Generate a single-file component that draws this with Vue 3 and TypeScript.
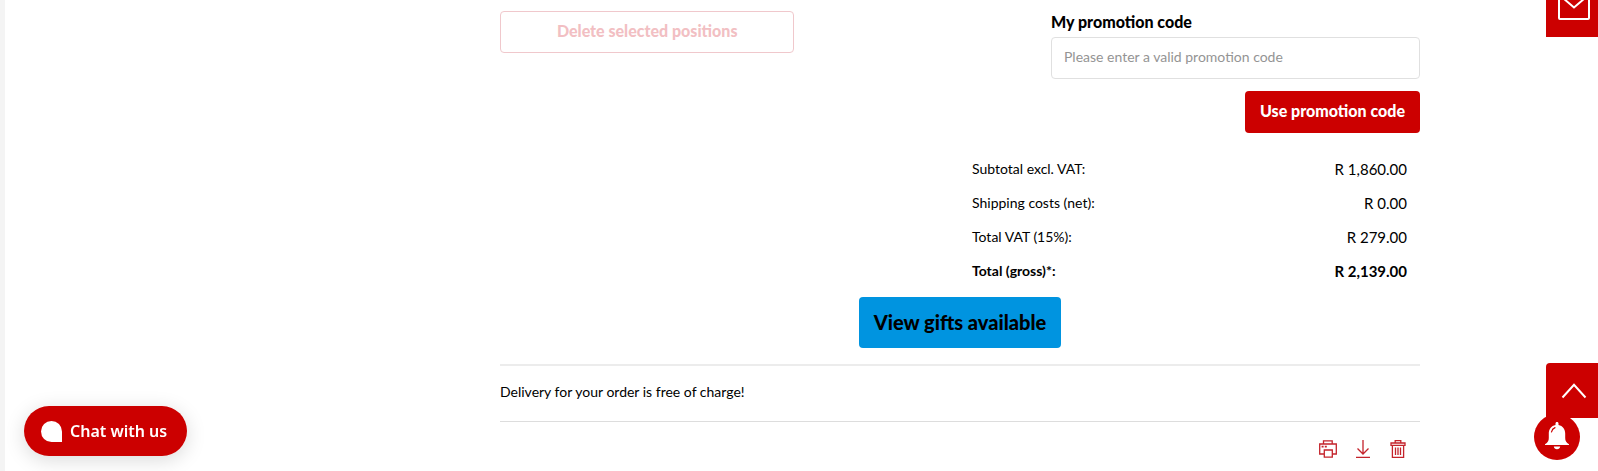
<script setup lang="ts">
import { ref } from 'vue'

interface TotalRow {
  label: string
  value: string
  strong?: boolean
}

const promotionCode = ref('')

const totals: TotalRow[] = [
  { label: 'Subtotal excl. VAT:', value: 'R 1,860.00' },
  { label: 'Shipping costs (net):', value: 'R 0.00' },
  { label: 'Total VAT (15%):', value: 'R 279.00' },
  { label: 'Total (gross)*:', value: 'R 2,139.00', strong: true },
]
</script>

<template>
  <div class="page">
    <main class="cart">
      <div class="top">
        <button class="btn delete" type="button" disabled>Delete selected positions</button>
        <form class="promotion" @submit.prevent>
          <label for="promotion-code">My promotion code</label>
          <input id="promotion-code" v-model="promotionCode" type="text" placeholder="Please enter a valid promotion code" />
          <button class="btn use" type="submit">Use promotion code</button>
        </form>
      </div>

      <table class="totals">
        <tbody>
          <tr v-for="row in totals" :key="row.label" :class="{ strong: row.strong }">
            <th scope="row">{{ row.label }}</th>
            <td>{{ row.value }}</td>
          </tr>
        </tbody>
      </table>

      <div class="gifts">
        <button class="btn view" type="button">View gifts available</button>
      </div>

      <p class="delivery">Delivery for your order is free of charge!</p>

      <div class="actions">
        <button type="button" aria-label="Print">
          <svg width="18" height="18" viewBox="0 0 18 18">
            <path d="M4.5 4V.8h8.7V4M4.8 14H.7V4h16.6v10h-3.6M5.3 10h8v7.2h-8z" />
            <path d="M2.6 6.6h2M5.8 6.6h2" stroke-width="1.8" />
          </svg>
        </button>
        <button type="button" aria-label="Download">
          <svg width="18" height="18" viewBox="0 0 18 18">
            <path d="M9 0v14M3.5 8.5 9 14l5.5-5.5M2 17.300h14" />
          </svg>
        </button>
        <button type="button" aria-label="Delete cart">
          <svg width="18" height="18" viewBox="0 0 18 18">
            <path d="M6.2 3V.7h5.6V3M2 3h14v2.300H2zM3.4 5.300h11.200v12H3.400zM6.5 7.5V15M9 7.5V15M11.5 7.5V15" />
          </svg>
        </button>
      </div>
    </main>

    <button class="chat" type="button">
      <svg width="21" height="21" viewBox="0 0 21 21"><path d="M10.5 0A10.5 10.5 0 0 1 21 10.5V21H10.5a10.5 10.5 0 0 1 0-21z" /></svg>
      Chat with us
    </button>

    <a class="mail" href="#contact" aria-label="Contact">
      <svg width="32" height="26" viewBox="0 0 32 26">
        <rect x="1" y="1" width="30" height="24" rx="1" />
        <path d="m2 1.5 14 12 14-12" />
      </svg>
    </a>
    <a class="to-top" href="#top" aria-label="Back to top">
      <svg width="26" height="16" viewBox="0 0 26 16"><path d="M1.5 14.5 13 1.800l11.5 12.700" /></svg>
    </a>
    <button class="bell" type="button" aria-label="Notifications">
      <svg width="26" height="28" viewBox="0 0 26 28">
        <path
          class="body"
          d="M13 0c1 0 1.5.7 1.5 1.6v1.300c4.300.8 6.700 4.300 6.700 8.600v4.5c0 3 1 4.500 3.800 6.200v.8H1v-.8c2.800-1.700 3.800-3.200 3.800-6.200v-4.500c0-4.300 2.400-7.800 6.700-8.600V1.600C11.500.7 12 0 13 0zM9.800 24.500h6.400c-.3 1.700-1.500 2.700-3.200 2.700s-2.900-1-3.200-2.700z"
        />
        <path class="shine" d="M7.5 10c.4-2 1.500-3.600 3.500-4.400" />
      </svg>
    </button>
  </div>
</template>

<style>
body {
  margin: 0;
  background: #fff;
}
</style>

<style scoped>
* {
  box-sizing: border-box;
}
.page {
  min-height: 100vh;
  padding: 11px 16px 0 11px;
  border-left: 5px solid #f4f4f4;
  color: #000;
  font: 14px/24px Lato, 'Liberation Sans', sans-serif;
}
.cart {
  max-width: 1242px;
  margin: 0 auto;
  padding-left: 322px;
}
button,
input {
  font: inherit;
}
.top {
  display: flex;
  justify-content: space-between;
  align-items: flex-start;
}
.btn {
  height: 42px;
  padding: 0 15px 3px;
  border: 0;
  border-radius: 4px;
  font-size: 16px;
  font-weight: 900;
}
.delete {
  width: 32%;
  border: 1px solid #f0c8cc;
  background: #fff;
  color: #f2bfc3;
}
.promotion {
  width: 369px;
  display: flex;
  flex-direction: column;
}
.promotion label {
  margin-bottom: 4px;
  font-size: 16px;
  font-weight: 900;
  line-height: 22px;
}
.promotion input {
  height: 42px;
  padding: 0 12px 4px;
  border: 1px solid #e0e0e0;
  border-radius: 4px;
  background: #fff;
  color: #000;
}
.promotion input::placeholder {
  color: #949494;
  opacity: 1;
}
.use {
  align-self: flex-end;
  margin-top: 12px;
  background: #c00;
  color: #fff;
}
.totals {
  width: 448px;
  margin: 19px 0 0 auto;
  border-collapse: collapse;
  line-height: 24px;
}
.totals th,
.totals td {
  padding: 5px 0;
  font-weight: 400;
  text-align: left;
}
.totals td {
  padding-right: 13px;
  font-size: 15px;
  text-align: right;
}
.totals .strong th,
.totals .strong td {
  font-weight: 700;
}
.gifts {
  display: flex;
  justify-content: center;
  padding: 9px 0 16px;
  border-bottom: 2px solid #ececec;
}
.view {
  height: 51px;
  padding: 0 15px 2px;
  background: #0094e0;
  color: #000;
  font-size: 20px;
}
.delivery {
  margin: 0;
  padding: 14px 0 17px;
  border-bottom: 1px solid #ddd;
}
.actions {
  display: flex;
  justify-content: flex-end;
  gap: 17px;
  padding: 18px 13px 0 0;
}
.actions button {
  display: flex;
  padding: 0;
  border: 0;
  background: none;
}
.actions svg {
  fill: none;
  stroke: #c4232b;
  stroke-width: 1.3;
}
.chat {
  position: fixed;
  left: 24px;
  bottom: 15px;
  height: 50px;
  display: flex;
  align-items: center;
  gap: 8px;
  padding: 0 20px 0 17px;
  border: 0;
  border-radius: 25px;
  background: #c00;
  box-shadow: 0 4px 20px rgba(0, 0, 0, 0.15);
  color: #fff;
  font: 600 16px/24px 'Noto Sans', 'Open Sans', sans-serif;
}
.chat svg {
  fill: #fff;
}
.mail,
.to-top {
  position: fixed;
  right: 0;
  width: 52px;
  display: flex;
  justify-content: center;
  padding-left: 4px;
  background: #c00;
}
.mail {
  top: -17px;
  height: 54px;
  padding-top: 11px;
}
.mail svg,
.to-top svg {
  fill: none;
  stroke: #fff;
  stroke-width: 2;
}
.to-top {
  bottom: 53px;
  height: 55px;
  padding-top: 20px;
  border-radius: 4px 0 0 0;
}
.bell {
  position: fixed;
  right: 18px;
  bottom: 11px;
  width: 46px;
  height: 46px;
  display: flex;
  align-items: center;
  justify-content: center;
  padding: 0 0 2px;
  border: 0;
  border-radius: 50%;
  background: #c00;
}
.bell .body {
  fill: #fff;
}
.bell .shine {
  fill: none;
  stroke: #c00;
  stroke-width: 1.2;
  stroke-linecap: round;
}
</style>
